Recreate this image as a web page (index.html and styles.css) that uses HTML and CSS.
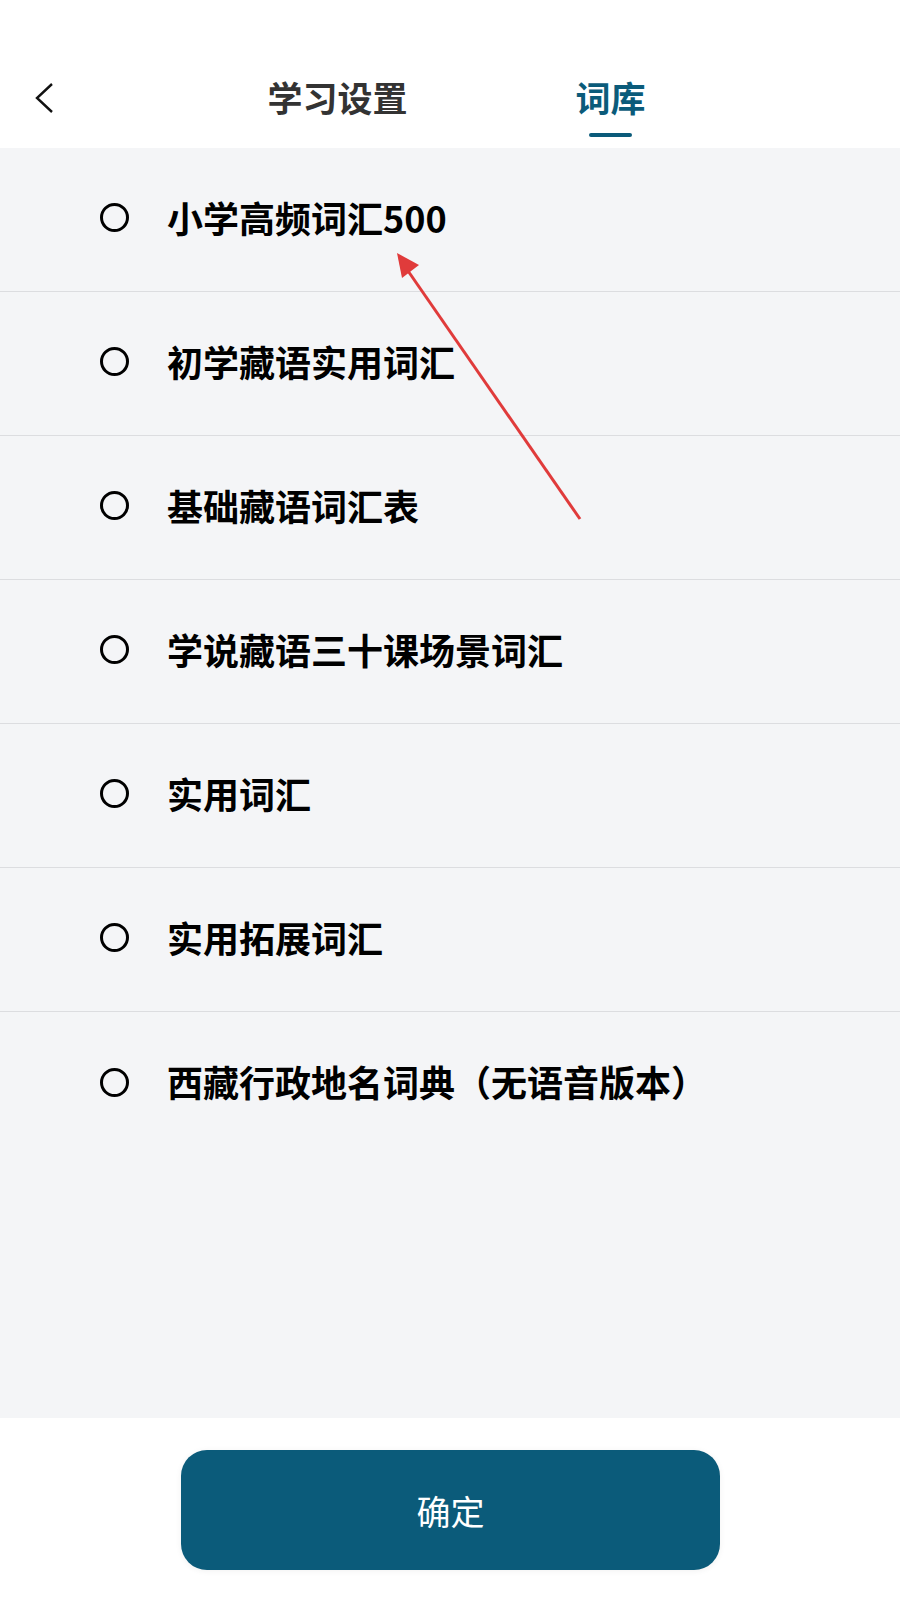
FILE: index.html
```html
<!DOCTYPE html>
<html lang="zh-CN">
<head>
    <meta charset="UTF-8">
    <meta name="viewport" content="width=device-width, initial-scale=1.0">
    <title>词库</title>
    <link rel="stylesheet" href="styles.css">
</head>
<body>

    <div class="page">
        <div class="top-bar">
            <a href="#" class="back-btn">
                <svg width="20" height="32" viewBox="0 0 20 32">
                    <polyline points="17,2 2,16 17,30" fill="none" stroke="#111" stroke-width="2.4" stroke-linejoin="miter"/>
                </svg>
            </a>
            <div class="tab">
                <span class="tab-label">学习设置</span>
            </div>
            <div class="tab active">
                <span class="tab-label">词库</span>
                <span class="tab-line"></span>
            </div>
        </div>

        <ul class="book-list">
            <li class="book-item"><span class="radio"></span><span class="book-name">小学高频词汇500</span></li>
            <li class="book-item"><span class="radio"></span><span class="book-name">初学藏语实用词汇</span></li>
            <li class="book-item"><span class="radio"></span><span class="book-name">基础藏语词汇表</span></li>
            <li class="book-item"><span class="radio"></span><span class="book-name">学说藏语三十课场景词汇</span></li>
            <li class="book-item"><span class="radio"></span><span class="book-name">实用词汇</span></li>
            <li class="book-item"><span class="radio"></span><span class="book-name">实用拓展词汇</span></li>
            <li class="book-item last"><span class="radio"></span><span class="book-name">西藏行政地名词典（无语音版本）</span></li>
        </ul>

        <div class="bottom-bar">
            <button class="confirm-btn">确定</button>
        </div>

        <!-- annotation arrow -->
        <svg class="note-arrow" width="900" height="1600" viewBox="0 0 900 1600">
            <line x1="580" y1="519" x2="406" y2="268" stroke="#e03b3b" stroke-width="3"/>
            <polygon points="397,253 419,265 402,278" fill="#e03b3b"/>
        </svg>
    </div>

</body>
</html>
```

FILE: styles.css
```css
* {
    box-sizing: border-box;
}

body {
    margin: 0;
    background-color: #ffffff;
    font-family: "Noto Sans CJK SC", "Noto Sans", sans-serif;
}

.page {
    position: relative;
    width: 900px;
    height: 1600px;
    display: flex;
    flex-direction: column;
}

/* header */
.top-bar {
    height: 148px;
    display: flex;
    align-items: flex-start;
    background-color: #ffffff;
}

.back-btn {
    width: 201px;
    padding: 82px 0 0 35px;
    display: block;
}

.back-btn svg {
    display: block;
}

.tab {
    width: 273px;
    padding-top: 72px;
    display: flex;
    flex-direction: column;
    align-items: center;
}

.tab-label {
    font-size: 35px;
    font-weight: 700;
    line-height: 50px;
    color: #333333;
}

.tab.active .tab-label {
    color: #0b5b7a;
}

.tab-line {
    width: 43px;
    height: 4px;
    margin-top: 11px;
    border-radius: 2px;
    background-color: #0b5b7a;
}

/* list */
.book-list {
    list-style: none;
    margin: 0;
    padding: 0;
    flex: 1;
    background-color: #f4f5f7;
}

.book-item {
    height: 144px;
    display: flex;
    align-items: center;
    padding-left: 100px;
    padding-bottom: 6px;
    border-bottom: 1px solid #dcdde0;
}

.book-item.last {
    border-bottom: none;
}

.radio {
    width: 29px;
    height: 29px;
    margin-top: 2px;
    border: 3px solid #000000;
    border-radius: 50%;
    flex-shrink: 0;
}

.book-name {
    margin-left: 38px;
    font-size: 36px;
    font-weight: 700;
    color: #000000;
}

/* footer */
.bottom-bar {
    height: 182px;
    padding-top: 32px;
    display: flex;
    justify-content: center;
    align-items: flex-start;
    background-color: #ffffff;
}

.confirm-btn {
    width: 539px;
    height: 120px;
    margin-left: 1px;
    border: none;
    border-radius: 26px;
    background-color: #0b5b7a;
    color: #ffffff;
    font-family: "Noto Sans CJK SC", "Noto Sans", sans-serif;
    font-size: 34px;
    box-shadow: 0 1px 6px rgba(0, 0, 0, 0.06);
}

.note-arrow {
    position: absolute;
    left: 0;
    top: 0;
    pointer-events: none;
}
```
